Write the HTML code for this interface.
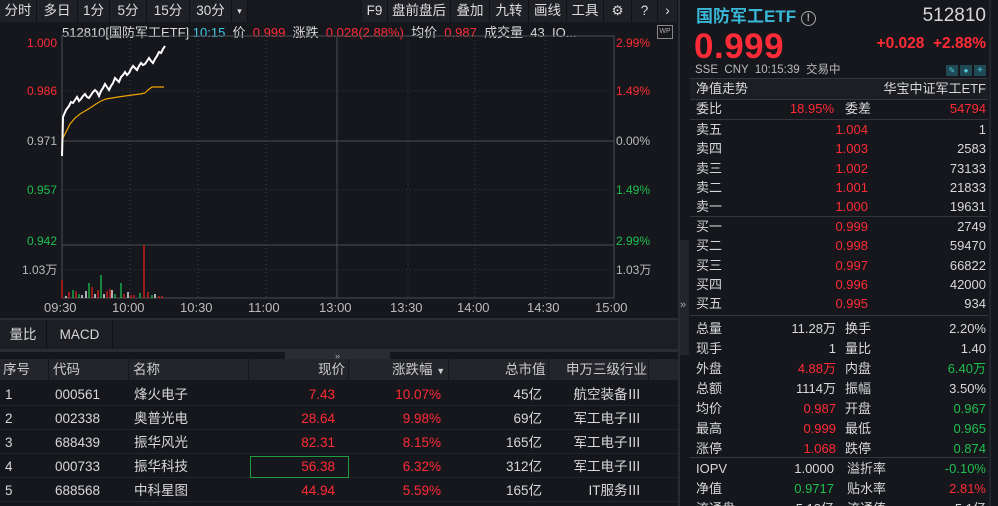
<!DOCTYPE html>
<html><head><meta charset="utf-8"><style>
*{margin:0;padding:0;box-sizing:border-box}
html,body{width:998px;height:506px;overflow:hidden}
body{background:#15171c;font-family:"Liberation Sans","Noto Sans CJK SC",sans-serif;font-size:13px;color:#d8d8d8;position:relative}
.a{position:absolute;white-space:nowrap;line-height:17px}
.r{color:#ff2b36}.g{color:#1fbf4f}.w{color:#e6e6e6}
.tb{position:absolute;top:0;height:22px;background:#1e2026;border-right:1px solid #111;line-height:22px;text-align:center;font-size:13.5px;color:#ddd}
.rt{text-align:right}
</style></head><body>
<div class="a" style="left:0;top:0;width:678px;height:22px;background:#16181d"></div>
<div class="tb" style="left:0;width:37px">分时</div>
<div class="tb" style="left:37px;width:41px">多日</div>
<div class="tb" style="left:78px;width:32px">1分</div>
<div class="tb" style="left:110px;width:37px">5分</div>
<div class="tb" style="left:147px;width:43px">15分</div>
<div class="tb" style="left:190px;width:42px">30分</div>
<div class="tb" style="left:232px;width:16px;font-size:9px">▾</div>
<div class="tb" style="left:362px;width:26px">F9</div>
<div class="tb" style="left:388px;width:63px">盘前盘后</div>
<div class="tb" style="left:451px;width:39px">叠加</div>
<div class="tb" style="left:490px;width:39px">九转</div>
<div class="tb" style="left:529px;width:38px">画线</div>
<div class="tb" style="left:567px;width:37px">工具</div>
<div class="tb" style="left:604px;width:28px">⚙</div>
<div class="tb" style="left:632px;width:26px">?</div>
<div class="tb" style="left:658px;width:20px">›</div>
<div class="a" style="left:62px;top:24px;font-size:13px">512810[国防军工ETF] <span style="color:#3fc8e8">10:15</span> &nbsp;价 &nbsp;<span class="r">0.999</span> &nbsp;涨跌 &nbsp;<span class="r">0.028(2.88%)</span> &nbsp;均价 &nbsp;<span class="r">0.987</span> &nbsp;成交量 &nbsp;43 &nbsp;IO...</div>
<div class="a" style="left:657px;top:25px;width:16px;height:14px;border:1px solid #888;font-size:7px;line-height:12px;text-align:center;color:#aaa">WP</div>
<div class="a r" style="left:27px;top:35px;font-size:12px">1.000</div>
<div class="a r" style="left:27px;top:83px;font-size:12px">0.986</div>
<div class="a" style="left:27px;top:133px;font-size:12px;color:#bbb">0.971</div>
<div class="a g" style="left:27px;top:182px;font-size:12px">0.957</div>
<div class="a g" style="left:27px;top:233px;font-size:12px">0.942</div>
<div class="a" style="left:22px;top:262px;font-size:12px;color:#bbb">1.03万</div>
<div class="a r" style="left:616px;top:35px;font-size:12px">2.99%</div>
<div class="a r" style="left:616px;top:83px;font-size:12px">1.49%</div>
<div class="a" style="left:616px;top:133px;font-size:12px;color:#bbb">0.00%</div>
<div class="a g" style="left:616px;top:182px;font-size:12px">1.49%</div>
<div class="a g" style="left:616px;top:233px;font-size:12px">2.99%</div>
<div class="a" style="left:616px;top:262px;font-size:12px;color:#bbb">1.03万</div>
<svg class="a" style="left:0;top:0" width="680" height="320">
<g stroke="#3a3d44" stroke-dasharray="1,3" fill="none">
<line x1="62" y1="91" x2="614" y2="91"/><line x1="62" y1="190" x2="614" y2="190"/><line x1="62" y1="270" x2="614" y2="270"/>
<line x1="130" y1="36" x2="130" y2="298"/><line x1="198" y1="36" x2="198" y2="298"/><line x1="266" y1="36" x2="266" y2="298"/>
<line x1="408" y1="36" x2="408" y2="298"/><line x1="475" y1="36" x2="475" y2="298"/><line x1="545" y1="36" x2="545" y2="298"/>
</g>
<g stroke="#4a4d55" fill="none">
<rect x="62" y="36" width="552" height="262"/>
<line x1="62" y1="141" x2="614" y2="141"/><line x1="62" y1="245" x2="614" y2="245"/>
<line x1="337" y1="36" x2="337" y2="298"/>
</g>
<polyline fill="none" stroke="#f0a400" stroke-width="1.2" points="62,140 66,132 70,124 75,118 80,114 85,111 90,108 96,104 101,101 106,99 112,98 118,97 125,96 132,95 140,94 145,93 148,90 152,87 164,87"/>
<polyline fill="none" stroke="#fff" stroke-width="2" points="62,156 63,117 66,110 69,106 71,102 73,103 75,100 77,97 79,101 81,99 83,96 85,94 87,97 89,98 91,95 93,92 95,90 97,92 99,96 101,91 103,88 105,84 107,87 109,90 111,86 113,83 115,78 117,80 119,82 121,77 123,75 125,72 127,75 129,73 131,69 133,66 135,68 137,70 139,66 141,63 143,65 145,64 147,61 149,58 151,61 153,63 155,59 157,56 159,52 161,53 163,49 165,46"/>
<g stroke-width="1.3">
<line x1="62" y1="298" x2="62" y2="280" stroke="#e02020"/>
<line x1="66" y1="298" x2="66" y2="296" stroke="#fff"/>
<line x1="69" y1="298" x2="69" y2="292" stroke="#e02020"/>
<line x1="73" y1="298" x2="73" y2="290" stroke="#1fbf4f"/>
<line x1="76" y1="298" x2="76" y2="291" stroke="#e02020"/>
<line x1="79" y1="298" x2="79" y2="294" stroke="#1fbf4f"/>
<line x1="82" y1="298" x2="82" y2="295" stroke="#fff"/>
<line x1="86" y1="298" x2="86" y2="291" stroke="#fff"/>
<line x1="89" y1="298" x2="89" y2="283" stroke="#1fbf4f"/>
<line x1="92" y1="298" x2="92" y2="287" stroke="#e02020"/>
<line x1="95" y1="298" x2="95" y2="294" stroke="#fff"/>
<line x1="98" y1="298" x2="98" y2="290" stroke="#e02020"/>
<line x1="101" y1="298" x2="101" y2="275" stroke="#1fbf4f"/>
<line x1="104" y1="298" x2="104" y2="294" stroke="#fff"/>
<line x1="107" y1="298" x2="107" y2="291" stroke="#e02020"/>
<line x1="110" y1="298" x2="110" y2="289" stroke="#e02020"/>
<line x1="112" y1="298" x2="112" y2="290" stroke="#fff"/>
<line x1="115" y1="298" x2="115" y2="294" stroke="#1fbf4f"/>
<line x1="121" y1="298" x2="121" y2="283" stroke="#1fbf4f"/>
<line x1="124" y1="298" x2="124" y2="294" stroke="#e02020"/>
<line x1="128" y1="298" x2="128" y2="292" stroke="#fff"/>
<line x1="131" y1="298" x2="131" y2="295" stroke="#e02020"/>
<line x1="134" y1="298" x2="134" y2="295" stroke="#e02020"/>
<line x1="140" y1="298" x2="140" y2="293" stroke="#1fbf4f"/>
<line x1="144" y1="298" x2="144" y2="245" stroke="#e02020"/>
<line x1="148" y1="298" x2="148" y2="292" stroke="#e02020"/>
<line x1="152" y1="298" x2="152" y2="295" stroke="#1fbf4f"/>
<line x1="155" y1="298" x2="155" y2="294" stroke="#fff"/>
<line x1="159" y1="298" x2="159" y2="296" stroke="#e02020"/>
<line x1="162" y1="298" x2="162" y2="296" stroke="#e02020"/>
</g>
</svg>
<div class="a" style="left:44px;top:299px;font-size:13px;color:#bbb;width:600px">
<span class="a" style="left:0">09:30</span><span class="a" style="left:68px">10:00</span><span class="a" style="left:136px">10:30</span><span class="a" style="left:204px">11:00</span><span class="a" style="left:275px">13:00</span><span class="a" style="left:346px">13:30</span><span class="a" style="left:413px">14:00</span><span class="a" style="left:483px">14:30</span><span class="a" style="left:551px">15:00</span></div>
<div class="a" style="left:0;top:318px;width:678px;height:2px;background:#2a2c33"></div>
<div class="a" style="left:0;top:320px;width:678px;height:29px;background:#1c1e24"></div>
<div class="a" style="left:0;top:320px;width:47px;height:29px;line-height:29px;text-align:center;border-right:1px solid #111;font-size:13.5px">量比</div>
<div class="a" style="left:47px;top:320px;width:66px;height:29px;line-height:29px;text-align:center;border-right:1px solid #111;font-size:13.5px">MACD</div>
<div class="a" style="left:0;top:349px;width:678px;height:3px;background:#2a2c33"></div>
<div class="a" style="left:285px;top:351px;width:105px;height:10px;background:#2a2c33;font-size:9px;text-align:center;line-height:10px;color:#aaa">»</div>
<div class="a" style="left:0;top:359px;width:678px;height:21px;background:#23252b;font-size:13.5px;color:#ccc;line-height:21px">
<span class="a" style="left:3px;line-height:21px">序号</span><span class="a" style="left:53px;line-height:21px">代码</span><span class="a" style="left:133px;line-height:21px">名称</span><span class="a" style="left:318px;line-height:21px">现价</span><span class="a" style="left:392px;line-height:21px">涨跌幅 <span style="font-size:9px">▼</span></span><span class="a" style="left:505px;line-height:21px">总市值</span><span class="a" style="left:566px;line-height:21px">申万三级行业</span></div>
<svg class="a" style="left:0;top:359px" width="678" height="147"><g stroke="#15171c"><line x1="48.5" y1="0" x2="48.5" y2="21"/><line x1="128.5" y1="0" x2="128.5" y2="21"/><line x1="248.5" y1="0" x2="248.5" y2="21"/><line x1="348.5" y1="0" x2="348.5" y2="21"/><line x1="448.5" y1="0" x2="448.5" y2="21"/><line x1="548.5" y1="0" x2="548.5" y2="21"/><line x1="648.5" y1="0" x2="648.5" y2="21"/></g>
<g stroke="#22252b"><line x1="0" y1="46.5" x2="678" y2="46.5"/><line x1="0" y1="70.5" x2="678" y2="70.5"/><line x1="0" y1="94.5" x2="678" y2="94.5"/><line x1="0" y1="118.5" x2="678" y2="118.5"/><line x1="0" y1="142.5" x2="678" y2="142.5"/></g></svg>
<div class="a" style="left:250px;top:456px;width:99px;height:22px;border:1px solid #1f9a3f"></div>
<div style="font-size:13.5px">
<div class="a" style="left:0;top:386px;width:678px;height:20px"><span class="a" style="left:5px">1</span><span class="a" style="left:55px">000561</span><span class="a" style="left:134px">烽火电子</span><span class="a r rt" style="right:343px">7.43</span><span class="a r rt" style="right:237px">10.07%</span><span class="a rt" style="right:136px">45亿</span><span class="a rt" style="right:37px">航空装备Ⅲ</span></div>
<div class="a" style="left:0;top:410px;width:678px;height:20px"><span class="a" style="left:5px">2</span><span class="a" style="left:55px">002338</span><span class="a" style="left:134px">奥普光电</span><span class="a r rt" style="right:343px">28.64</span><span class="a r rt" style="right:237px">9.98%</span><span class="a rt" style="right:136px">69亿</span><span class="a rt" style="right:37px">军工电子Ⅲ</span></div>
<div class="a" style="left:0;top:434px;width:678px;height:20px"><span class="a" style="left:5px">3</span><span class="a" style="left:55px">688439</span><span class="a" style="left:134px">振华风光</span><span class="a r rt" style="right:343px">82.31</span><span class="a r rt" style="right:237px">8.15%</span><span class="a rt" style="right:136px">165亿</span><span class="a rt" style="right:37px">军工电子Ⅲ</span></div>
<div class="a" style="left:0;top:458px;width:678px;height:20px"><span class="a" style="left:5px">4</span><span class="a" style="left:55px">000733</span><span class="a" style="left:134px">振华科技</span><span class="a r rt" style="right:343px">56.38</span><span class="a r rt" style="right:237px">6.32%</span><span class="a rt" style="right:136px">312亿</span><span class="a rt" style="right:37px">军工电子Ⅲ</span></div>
<div class="a" style="left:0;top:482px;width:678px;height:20px"><span class="a" style="left:5px">5</span><span class="a" style="left:55px">688568</span><span class="a" style="left:134px">中科星图</span><span class="a r rt" style="right:343px">44.94</span><span class="a r rt" style="right:237px">5.59%</span><span class="a rt" style="right:136px">165亿</span><span class="a rt" style="right:37px">IT服务Ⅲ</span></div>
</div>
<div class="a" style="left:678px;top:0;width:2px;height:506px;background:#2a2c33"></div>
<div class="a" style="left:680px;top:240px;width:9px;height:115px;background:#22252b;color:#aaa;font-size:11px;line-height:130px">»</div>
<div class="a" style="left:989px;top:0;width:2px;height:506px;background:#22252b"></div>
<div class="a" style="left:696px;top:6px;font-size:17px;line-height:22px;font-weight:bold;color:#3ab8d8">国防军工ETF <span style="display:inline-block;width:15px;height:15px;border:1.5px solid #aaa;border-radius:50%;font-size:11px;line-height:12px;text-align:center;color:#aaa;vertical-align:1px">!</span></div>
<div class="a" style="right:12px;top:5px;font-size:19px;line-height:22px;color:#d8d8d8">512810</div>
<div class="a r" style="left:694px;top:28px;font-size:35px;line-height:38px;font-weight:bold;letter-spacing:0.5px">0.999</div>
<div class="a r" style="right:12px;top:35px;font-size:15.5px;line-height:18px;font-weight:bold">+0.028 &nbsp;+2.88%</div>
<div class="a" style="left:695px;top:63px;font-size:11.5px;line-height:14px;color:#bbb">SSE &nbsp;CNY &nbsp;10:15:39 &nbsp;交易中</div>
<div class="a" style="left:946px;top:65px;width:12px;height:11px;background:#1f4a55;color:#5cd;font-size:8px;line-height:11px;text-align:center">✎</div>
<div class="a" style="left:960px;top:65px;width:12px;height:11px;background:#1f4a55;color:#5cd;font-size:8px;line-height:11px;text-align:center">●</div>
<div class="a" style="left:974px;top:65px;width:12px;height:11px;background:#1f4a55;color:#5cd;font-size:10px;line-height:11px;text-align:center">+</div>
<div class="a" style="left:690px;top:78px;width:298px;height:1px;background:#33363d"></div>
<div class="a" style="left:690px;top:79px;width:298px;height:20px;background:#1c1e24"></div>
<div class="a" style="left:696px;top:80px;font-size:13px">净值走势</div>
<div class="a" style="right:12px;top:80px;font-size:13px">华宝中证军工ETF</div>
<div class="a" style="left:690px;top:99px;width:298px;height:1px;background:#33363d"></div>
<div style="font-size:13px">
<div class="a" style="left:696px;top:100px">委比</div><div class="a r" style="right:164px;top:100px">18.95%</div><div class="a" style="left:845px;top:100px">委差</div><div class="a r" style="right:12px;top:100px">54794</div>
</div>
<div class="a" style="left:690px;top:119px;width:298px;height:1px;background:#33363d"></div>
<div class="a" style="left:690px;top:216px;width:298px;height:1px;background:#33363d"></div>
<div class="a" style="left:690px;top:315px;width:298px;height:1px;background:#33363d"></div>
<div class="a" style="left:690px;top:457px;width:298px;height:1px;background:#33363d"></div>
<div style="font-size:13px">
<div class="a" style="left:696px;top:121px">卖五</div><div class="a r" style="right:130px;top:121px">1.004</div><div class="a rt" style="right:12px;top:121px">1</div>
<div class="a" style="left:696px;top:140px">卖四</div><div class="a r" style="right:130px;top:140px">1.003</div><div class="a rt" style="right:12px;top:140px">2583</div>
<div class="a" style="left:696px;top:160px">卖三</div><div class="a r" style="right:130px;top:160px">1.002</div><div class="a rt" style="right:12px;top:160px">73133</div>
<div class="a" style="left:696px;top:179px">卖二</div><div class="a r" style="right:130px;top:179px">1.001</div><div class="a rt" style="right:12px;top:179px">21833</div>
<div class="a" style="left:696px;top:198px">卖一</div><div class="a r" style="right:130px;top:198px">1.000</div><div class="a rt" style="right:12px;top:198px">19631</div>
<div class="a" style="left:696px;top:218px">买一</div><div class="a r" style="right:130px;top:218px">0.999</div><div class="a rt" style="right:12px;top:218px">2749</div>
<div class="a" style="left:696px;top:237px">买二</div><div class="a r" style="right:130px;top:237px">0.998</div><div class="a rt" style="right:12px;top:237px">59470</div>
<div class="a" style="left:696px;top:257px">买三</div><div class="a r" style="right:130px;top:257px">0.997</div><div class="a rt" style="right:12px;top:257px">66822</div>
<div class="a" style="left:696px;top:276px">买四</div><div class="a r" style="right:130px;top:276px">0.996</div><div class="a rt" style="right:12px;top:276px">42000</div>
<div class="a" style="left:696px;top:295px">买五</div><div class="a r" style="right:130px;top:295px">0.995</div><div class="a rt" style="right:12px;top:295px">934</div>
<div class="a" style="left:696px;top:320px">总量</div><div class="a rt" style="right:162px;top:320px">11.28万</div><div class="a" style="left:845px;top:320px">换手</div><div class="a rt" style="right:12px;top:320px">2.20%</div>
<div class="a" style="left:696px;top:340px">现手</div><div class="a rt" style="right:162px;top:340px">1</div><div class="a" style="left:845px;top:340px">量比</div><div class="a rt" style="right:12px;top:340px">1.40</div>
<div class="a" style="left:696px;top:360px">外盘</div><div class="a r" style="right:162px;top:360px">4.88万</div><div class="a" style="left:845px;top:360px">内盘</div><div class="a g" style="right:12px;top:360px">6.40万</div>
<div class="a" style="left:696px;top:380px">总额</div><div class="a rt" style="right:162px;top:380px">1114万</div><div class="a" style="left:845px;top:380px">振幅</div><div class="a rt" style="right:12px;top:380px">3.50%</div>
<div class="a" style="left:696px;top:400px">均价</div><div class="a r" style="right:162px;top:400px">0.987</div><div class="a" style="left:845px;top:400px">开盘</div><div class="a g" style="right:12px;top:400px">0.967</div>
<div class="a" style="left:696px;top:420px">最高</div><div class="a r" style="right:162px;top:420px">0.999</div><div class="a" style="left:845px;top:420px">最低</div><div class="a g" style="right:12px;top:420px">0.965</div>
<div class="a" style="left:696px;top:440px">涨停</div><div class="a r" style="right:162px;top:440px">1.068</div><div class="a" style="left:845px;top:440px">跌停</div><div class="a g" style="right:12px;top:440px">0.874</div>
<div class="a" style="left:696px;top:460px">IOPV</div><div class="a rt" style="right:164px;top:460px">1.0000</div><div class="a" style="left:847px;top:460px">溢折率</div><div class="a g" style="right:12px;top:460px">-0.10%</div>
<div class="a" style="left:696px;top:480px">净值</div><div class="a g" style="right:164px;top:480px">0.9717</div><div class="a" style="left:847px;top:480px">贴水率</div><div class="a r" style="right:12px;top:480px">2.81%</div>
<div class="a" style="left:696px;top:500px">流通盘</div><div class="a rt" style="right:164px;top:500px">5.13亿</div><div class="a" style="left:847px;top:500px">流通值</div><div class="a rt" style="right:12px;top:500px">5.1亿</div>
</div>
</body></html>
